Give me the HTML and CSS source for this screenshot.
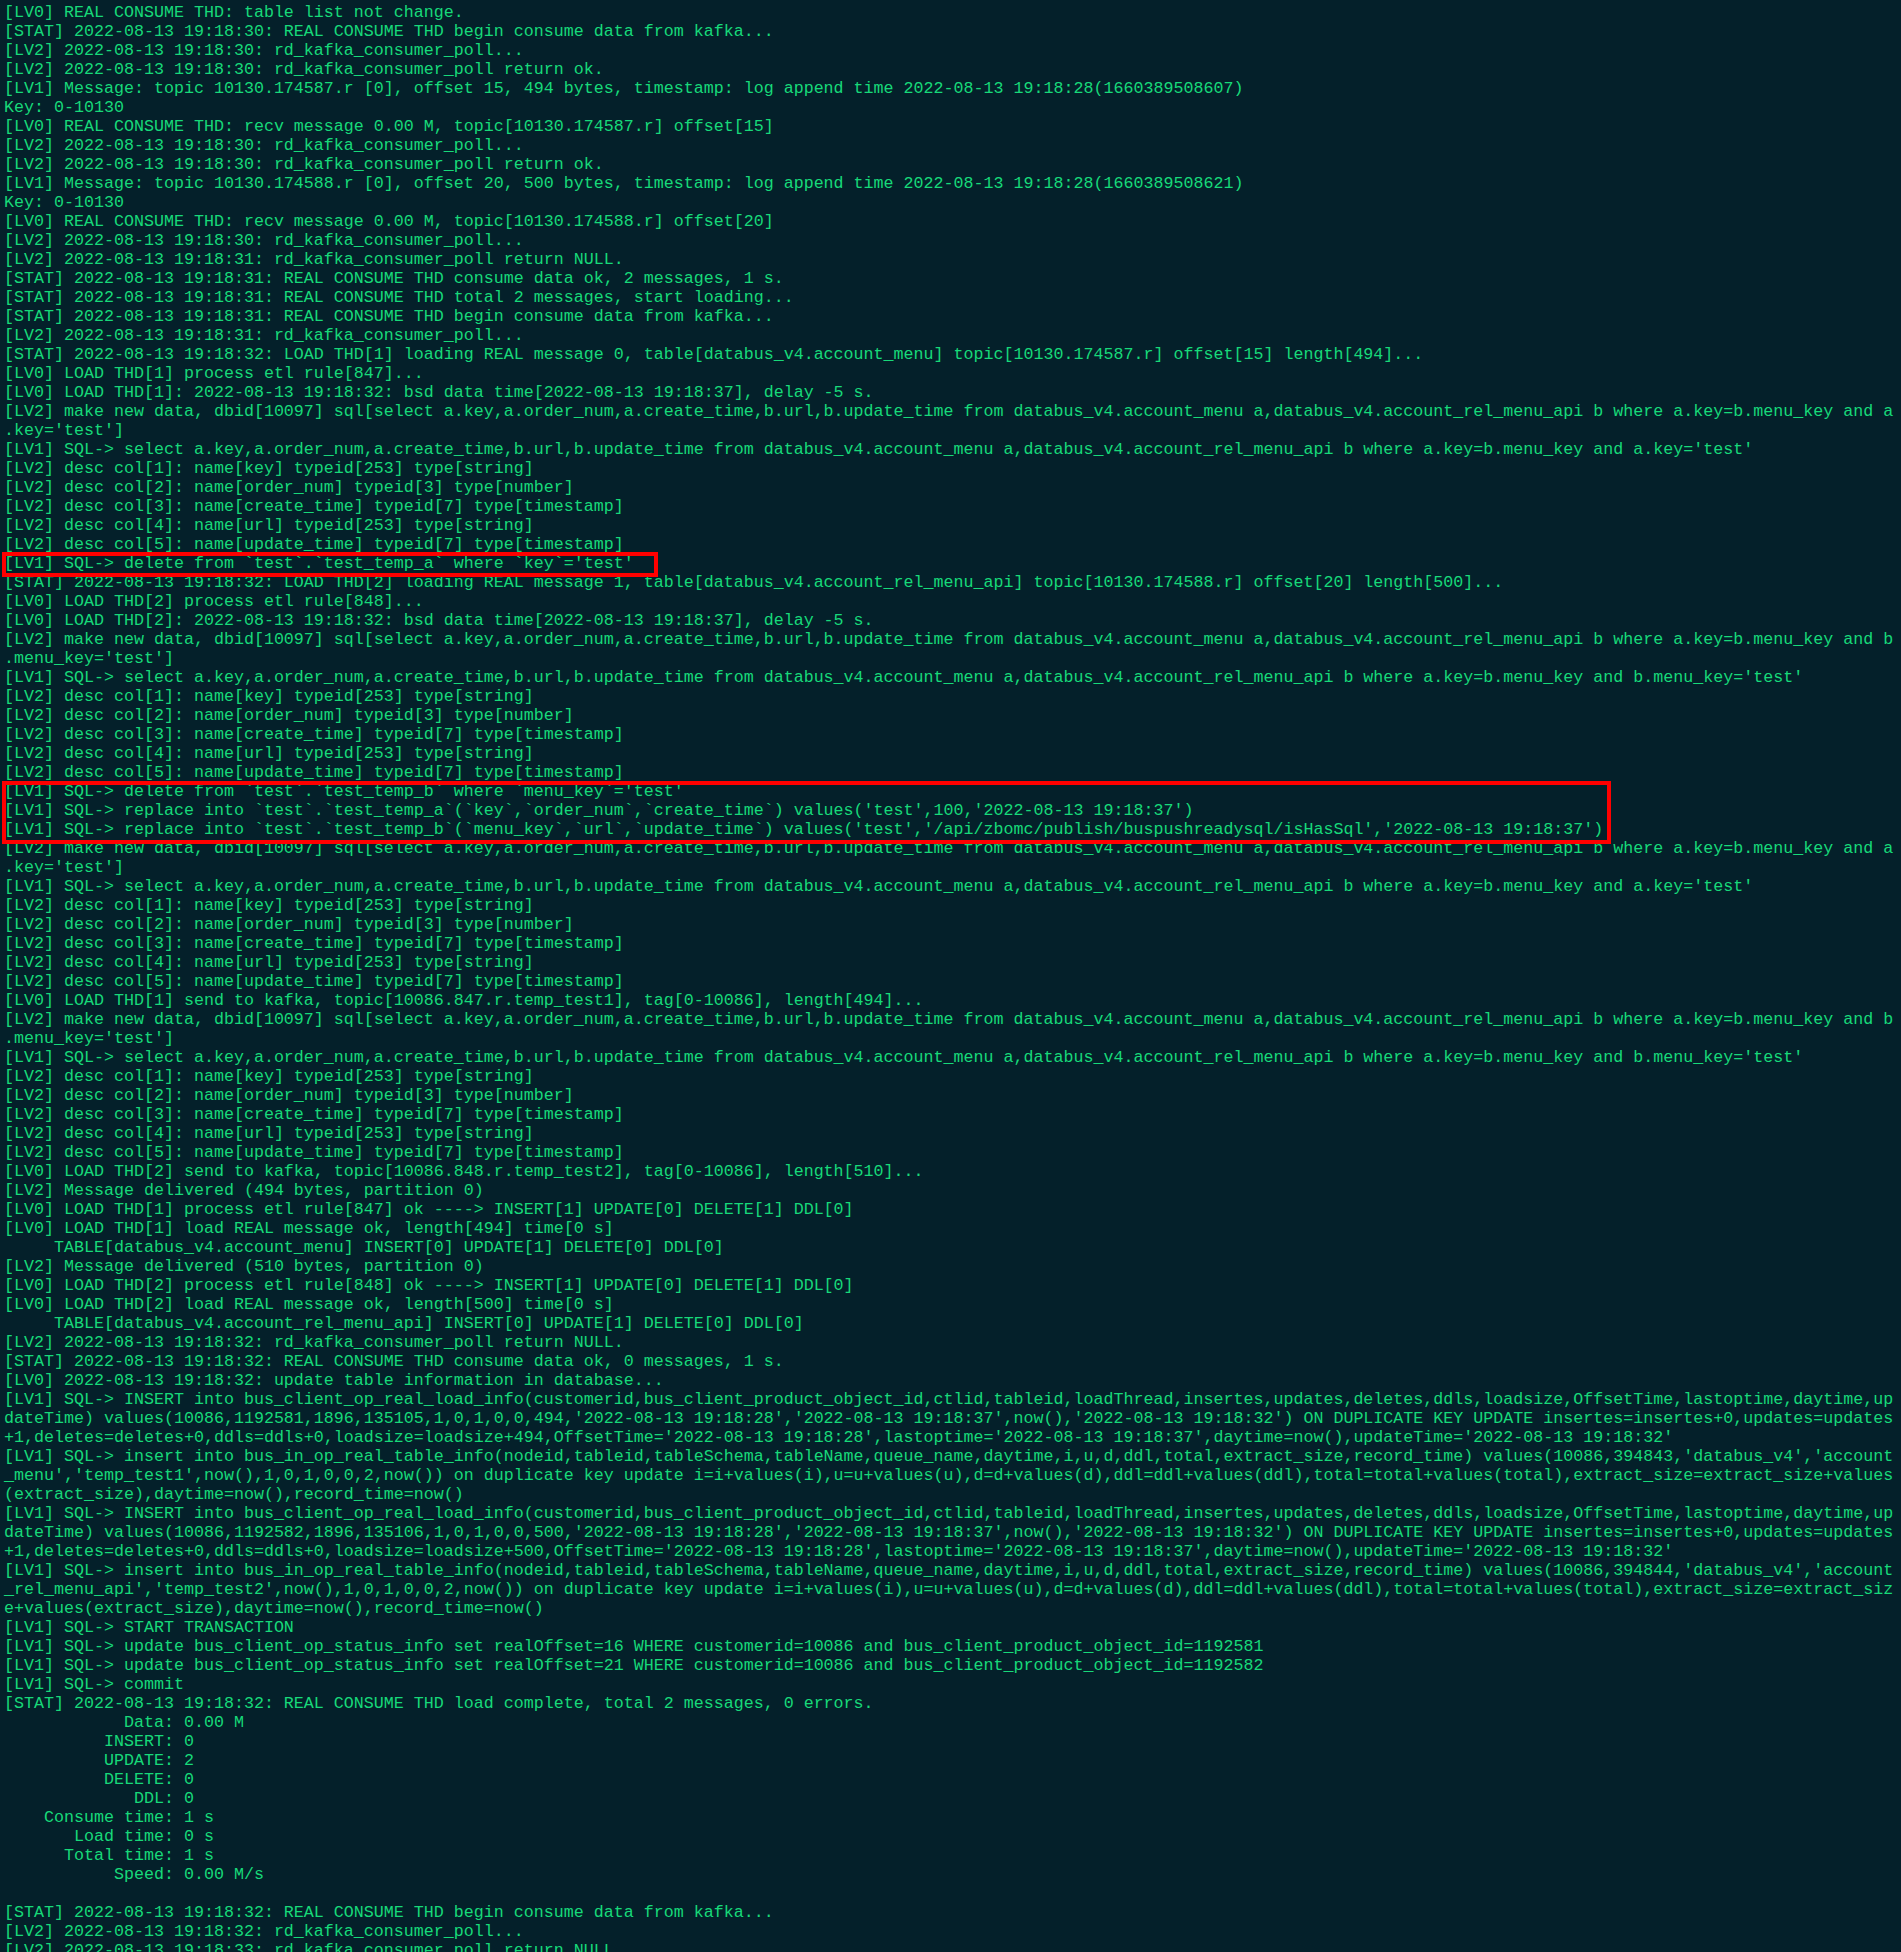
FILE: index.html
```html
<!DOCTYPE html>
<html lang="en">
<head>
    <meta charset="UTF-8">
    <meta name="viewport" content="width=device-width, initial-scale=1.0">
    <title>databus - real consume log</title>
    <link rel="stylesheet" href="styles.css">
</head>
<body>
    <div class="screen">
<pre class="log">[LV0] REAL CONSUME THD: table list not change.
[STAT] 2022-08-13 19:18:30: REAL CONSUME THD begin consume data from kafka...
[LV2] 2022-08-13 19:18:30: rd_kafka_consumer_poll...
[LV2] 2022-08-13 19:18:30: rd_kafka_consumer_poll return ok.
[LV1] Message: topic 10130.174587.r [0], offset 15, 494 bytes, timestamp: log append time 2022-08-13 19:18:28(1660389508607)
Key: 0-10130
[LV0] REAL CONSUME THD: recv message 0.00 M, topic[10130.174587.r] offset[15]
[LV2] 2022-08-13 19:18:30: rd_kafka_consumer_poll...
[LV2] 2022-08-13 19:18:30: rd_kafka_consumer_poll return ok.
[LV1] Message: topic 10130.174588.r [0], offset 20, 500 bytes, timestamp: log append time 2022-08-13 19:18:28(1660389508621)
Key: 0-10130
[LV0] REAL CONSUME THD: recv message 0.00 M, topic[10130.174588.r] offset[20]
[LV2] 2022-08-13 19:18:30: rd_kafka_consumer_poll...
[LV2] 2022-08-13 19:18:31: rd_kafka_consumer_poll return NULL.
[STAT] 2022-08-13 19:18:31: REAL CONSUME THD consume data ok, 2 messages, 1 s.
[STAT] 2022-08-13 19:18:31: REAL CONSUME THD total 2 messages, start loading...
[STAT] 2022-08-13 19:18:31: REAL CONSUME THD begin consume data from kafka...
[LV2] 2022-08-13 19:18:31: rd_kafka_consumer_poll...
[STAT] 2022-08-13 19:18:32: LOAD THD[1] loading REAL message 0, table[databus_v4.account_menu] topic[10130.174587.r] offset[15] length[494]...
[LV0] LOAD THD[1] process etl rule[847]...
[LV0] LOAD THD[1]: 2022-08-13 19:18:32: bsd data time[2022-08-13 19:18:37], delay -5 s.
[LV2] make new data, dbid[10097] sql[select a.key,a.order_num,a.create_time,b.url,b.update_time from databus_v4.account_menu a,databus_v4.account_rel_menu_api b where a.key=b.menu_key and a
.key='test']
[LV1] SQL-&gt; select a.key,a.order_num,a.create_time,b.url,b.update_time from databus_v4.account_menu a,databus_v4.account_rel_menu_api b where a.key=b.menu_key and a.key='test'
[LV2] desc col[1]: name[key] typeid[253] type[string]
[LV2] desc col[2]: name[order_num] typeid[3] type[number]
[LV2] desc col[3]: name[create_time] typeid[7] type[timestamp]
[LV2] desc col[4]: name[url] typeid[253] type[string]
[LV2] desc col[5]: name[update_time] typeid[7] type[timestamp]
[LV1] SQL-&gt; delete from `test`.`test_temp_a` where `key`='test'
[STAT] 2022-08-13 19:18:32: LOAD THD[2] loading REAL message 1, table[databus_v4.account_rel_menu_api] topic[10130.174588.r] offset[20] length[500]...
[LV0] LOAD THD[2] process etl rule[848]...
[LV0] LOAD THD[2]: 2022-08-13 19:18:32: bsd data time[2022-08-13 19:18:37], delay -5 s.
[LV2] make new data, dbid[10097] sql[select a.key,a.order_num,a.create_time,b.url,b.update_time from databus_v4.account_menu a,databus_v4.account_rel_menu_api b where a.key=b.menu_key and b
.menu_key='test']
[LV1] SQL-&gt; select a.key,a.order_num,a.create_time,b.url,b.update_time from databus_v4.account_menu a,databus_v4.account_rel_menu_api b where a.key=b.menu_key and b.menu_key='test'
[LV2] desc col[1]: name[key] typeid[253] type[string]
[LV2] desc col[2]: name[order_num] typeid[3] type[number]
[LV2] desc col[3]: name[create_time] typeid[7] type[timestamp]
[LV2] desc col[4]: name[url] typeid[253] type[string]
[LV2] desc col[5]: name[update_time] typeid[7] type[timestamp]
[LV1] SQL-&gt; delete from `test`.`test_temp_b` where `menu_key`='test'
[LV1] SQL-&gt; replace into `test`.`test_temp_a`(`key`,`order_num`,`create_time`) values('test',100,'2022-08-13 19:18:37')
[LV1] SQL-&gt; replace into `test`.`test_temp_b`(`menu_key`,`url`,`update_time`) values('test','/api/zbomc/publish/buspushreadysql/isHasSql','2022-08-13 19:18:37')
[LV2] make new data, dbid[10097] sql[select a.key,a.order_num,a.create_time,b.url,b.update_time from databus_v4.account_menu a,databus_v4.account_rel_menu_api b where a.key=b.menu_key and a
.key='test']
[LV1] SQL-&gt; select a.key,a.order_num,a.create_time,b.url,b.update_time from databus_v4.account_menu a,databus_v4.account_rel_menu_api b where a.key=b.menu_key and a.key='test'
[LV2] desc col[1]: name[key] typeid[253] type[string]
[LV2] desc col[2]: name[order_num] typeid[3] type[number]
[LV2] desc col[3]: name[create_time] typeid[7] type[timestamp]
[LV2] desc col[4]: name[url] typeid[253] type[string]
[LV2] desc col[5]: name[update_time] typeid[7] type[timestamp]
[LV0] LOAD THD[1] send to kafka, topic[10086.847.r.temp_test1], tag[0-10086], length[494]...
[LV2] make new data, dbid[10097] sql[select a.key,a.order_num,a.create_time,b.url,b.update_time from databus_v4.account_menu a,databus_v4.account_rel_menu_api b where a.key=b.menu_key and b
.menu_key='test']
[LV1] SQL-&gt; select a.key,a.order_num,a.create_time,b.url,b.update_time from databus_v4.account_menu a,databus_v4.account_rel_menu_api b where a.key=b.menu_key and b.menu_key='test'
[LV2] desc col[1]: name[key] typeid[253] type[string]
[LV2] desc col[2]: name[order_num] typeid[3] type[number]
[LV2] desc col[3]: name[create_time] typeid[7] type[timestamp]
[LV2] desc col[4]: name[url] typeid[253] type[string]
[LV2] desc col[5]: name[update_time] typeid[7] type[timestamp]
[LV0] LOAD THD[2] send to kafka, topic[10086.848.r.temp_test2], tag[0-10086], length[510]...
[LV2] Message delivered (494 bytes, partition 0)
[LV0] LOAD THD[1] process etl rule[847] ok ----&gt; INSERT[1] UPDATE[0] DELETE[1] DDL[0]
[LV0] LOAD THD[1] load REAL message ok, length[494] time[0 s]
     TABLE[databus_v4.account_menu] INSERT[0] UPDATE[1] DELETE[0] DDL[0]
[LV2] Message delivered (510 bytes, partition 0)
[LV0] LOAD THD[2] process etl rule[848] ok ----&gt; INSERT[1] UPDATE[0] DELETE[1] DDL[0]
[LV0] LOAD THD[2] load REAL message ok, length[500] time[0 s]
     TABLE[databus_v4.account_rel_menu_api] INSERT[0] UPDATE[1] DELETE[0] DDL[0]
[LV2] 2022-08-13 19:18:32: rd_kafka_consumer_poll return NULL.
[STAT] 2022-08-13 19:18:32: REAL CONSUME THD consume data ok, 0 messages, 1 s.
[LV0] 2022-08-13 19:18:32: update table information in database...
[LV1] SQL-&gt; INSERT into bus_client_op_real_load_info(customerid,bus_client_product_object_id,ctlid,tableid,loadThread,insertes,updates,deletes,ddls,loadsize,OffsetTime,lastoptime,daytime,up
dateTime) values(10086,1192581,1896,135105,1,0,1,0,0,494,'2022-08-13 19:18:28','2022-08-13 19:18:37',now(),'2022-08-13 19:18:32') ON DUPLICATE KEY UPDATE insertes=insertes+0,updates=updates
+1,deletes=deletes+0,ddls=ddls+0,loadsize=loadsize+494,OffsetTime='2022-08-13 19:18:28',lastoptime='2022-08-13 19:18:37',daytime=now(),updateTime='2022-08-13 19:18:32'
[LV1] SQL-&gt; insert into bus_in_op_real_table_info(nodeid,tableid,tableSchema,tableName,queue_name,daytime,i,u,d,ddl,total,extract_size,record_time) values(10086,394843,'databus_v4','account
_menu','temp_test1',now(),1,0,1,0,0,2,now()) on duplicate key update i=i+values(i),u=u+values(u),d=d+values(d),ddl=ddl+values(ddl),total=total+values(total),extract_size=extract_size+values
(extract_size),daytime=now(),record_time=now()
[LV1] SQL-&gt; INSERT into bus_client_op_real_load_info(customerid,bus_client_product_object_id,ctlid,tableid,loadThread,insertes,updates,deletes,ddls,loadsize,OffsetTime,lastoptime,daytime,up
dateTime) values(10086,1192582,1896,135106,1,0,1,0,0,500,'2022-08-13 19:18:28','2022-08-13 19:18:37',now(),'2022-08-13 19:18:32') ON DUPLICATE KEY UPDATE insertes=insertes+0,updates=updates
+1,deletes=deletes+0,ddls=ddls+0,loadsize=loadsize+500,OffsetTime='2022-08-13 19:18:28',lastoptime='2022-08-13 19:18:37',daytime=now(),updateTime='2022-08-13 19:18:32'
[LV1] SQL-&gt; insert into bus_in_op_real_table_info(nodeid,tableid,tableSchema,tableName,queue_name,daytime,i,u,d,ddl,total,extract_size,record_time) values(10086,394844,'databus_v4','account
_rel_menu_api','temp_test2',now(),1,0,1,0,0,2,now()) on duplicate key update i=i+values(i),u=u+values(u),d=d+values(d),ddl=ddl+values(ddl),total=total+values(total),extract_size=extract_siz
e+values(extract_size),daytime=now(),record_time=now()
[LV1] SQL-&gt; START TRANSACTION
[LV1] SQL-&gt; update bus_client_op_status_info set realOffset=16 WHERE customerid=10086 and bus_client_product_object_id=1192581
[LV1] SQL-&gt; update bus_client_op_status_info set realOffset=21 WHERE customerid=10086 and bus_client_product_object_id=1192582
[LV1] SQL-&gt; commit
[STAT] 2022-08-13 19:18:32: REAL CONSUME THD load complete, total 2 messages, 0 errors.
            Data: 0.00 M
          INSERT: 0
          UPDATE: 2
          DELETE: 0
             DDL: 0
    Consume time: 1 s
       Load time: 0 s
      Total time: 1 s
           Speed: 0.00 M/s

[STAT] 2022-08-13 19:18:32: REAL CONSUME THD begin consume data from kafka...
[LV2] 2022-08-13 19:18:32: rd_kafka_consumer_poll...
[LV2] 2022-08-13 19:18:33: rd_kafka_consumer_poll return NULL.</pre>
        <!-- marcas rojas sobre las sentencias SQL -->
        <div class="mark mark-delete"></div>
        <div class="mark mark-replace"></div>
    </div>
</body>
</html>
```

FILE: styles.css
```css
* {
    margin: 0;
    padding: 0;
    box-sizing: border-box;
}

body {
    background: #04202a;
    height: 100vh;
    overflow: hidden;
}

.screen {
    position: relative;
    width: 100%;
    height: 100%;
}

.log {
    padding: 3px 0 0 4px;
    font-family: "Liberation Mono", "Courier New", monospace;
    font-size: 16.66px;
    line-height: 19px;
    color: #17d979;
    white-space: pre;
}

.mark {
    position: absolute;
    left: 2px;
    border: 4px solid #ff0000;
}

.mark-delete {
    top: 552px;
    width: 656px;
    height: 25px;
}

.mark-replace {
    top: 781px;
    width: 1609px;
    height: 63px;
}
```
